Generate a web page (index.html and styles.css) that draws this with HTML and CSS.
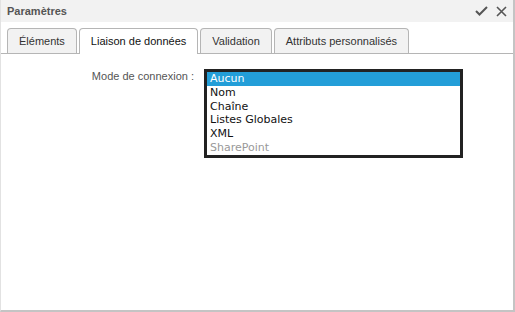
FILE: index.html
```html
<!DOCTYPE html>
<html lang="fr">
<head>
    <meta charset="UTF-8">
    <title>Paramètres</title>
    <link rel="stylesheet" href="styles.css">
</head>
<body>
    <div class="fenetre">
        <div class="entete">
            <span class="titre">Paramètres</span>
            <span class="actions">
                <svg width="13" height="10" viewBox="0 0 13 10"><path d="M1 5 L4.5 8.5 L12 1" fill="none" stroke="#555" stroke-width="2"/></svg>
                <svg width="11" height="11" viewBox="0 0 11 11"><path d="M1 1 L10 10 M10 1 L1 10" fill="none" stroke="#555" stroke-width="1.6"/></svg>
            </span>
        </div>
        <div class="onglets">
            <div class="onglet">Éléments</div>
            <div class="onglet actif">Liaison de données</div>
            <div class="onglet">Validation</div>
            <div class="onglet">Attributs personnalisés</div>
        </div>
        <div class="panneau">
            <label class="libelle">Mode de connexion :</label>
            <div class="liste">
                <div class="option choisie">Aucun</div>
                <div class="option">Nom</div>
                <div class="option">Chaîne</div>
                <div class="option">Listes Globales</div>
                <div class="option">XML</div>
                <div class="option inactive">SharePoint</div>
            </div>
        </div>
    </div>
</body>
</html>
```

FILE: styles.css
```css
html, body {
    margin: 0;
    height: 100%;
}
body {
    font-family: "Liberation Sans", Arial, sans-serif;
    font-size: 11px;
    color: #333;
    background: #fff;
}
.fenetre {
    box-sizing: border-box;
    height: 312px;
    border-left: 1px solid #e2e2e2;
    border-right: 2px solid #c4c4c4;
    border-bottom: 2px solid #c4c4c4;
    display: flex;
    flex-direction: column;
}
.entete {
    height: 22px;
    background: #f2f2f2;
    display: flex;
    align-items: center;
    justify-content: space-between;
    padding: 0 6px 0 6px;
}
.titre {
    font-weight: bold;
    color: #555;
}
.actions {
    display: flex;
    align-items: center;
    gap: 8px;
}
.onglets {
    display: flex;
    gap: 2px;
    padding: 6px 0 0 6px;
    border-bottom: 1px solid #b5b5b5;
}
.onglet {
    height: 24px;
    line-height: 24px;
    padding: 0 11px;
    border: 1px solid #b5b5b5;
    border-bottom: none;
    border-radius: 4px 4px 0 0;
    background: #f2f2f2;
    color: #333;
    margin-bottom: -1px;
}
.onglet.actif {
    background: #fff;
    height: 25px;
    color: #111;
}
.panneau {
    display: flex;
    align-items: flex-start;
    padding-top: 15px;
}
.libelle {
    width: 193px;
    text-align: right;
    color: #555;
    padding-top: 1px;
}
.liste {
    margin-left: 10px;
    width: 253px;
    border: 3px solid #222;
    font-family: "DejaVu Sans", Verdana, sans-serif;
    font-size: 11px;
}
.option {
    height: 13.8px;
    line-height: 13.8px;
    padding-left: 3px;
    color: #111;
}
.option.choisie {
    background: #239ed8;
    color: #fff;
}
.option.inactive {
    color: #999;
}
```
